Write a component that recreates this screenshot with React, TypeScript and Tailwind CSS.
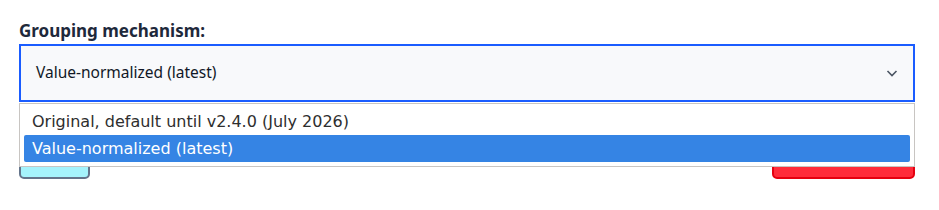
import React from "react";

export default function App() {
  return (
    <div className="w-[939px] h-[210px] bg-white pl-[19px] pr-[24px] pt-[19px] font-['Noto_Sans',sans-serif]">
      <div className="text-[17px] leading-[24px] font-bold text-[#1e293b]">Grouping mechanism:</div>
      <div className="relative mt-[1px]">
        <div className="flex items-center justify-between h-[58px] border-2 border-[#1a5cff] bg-[#f8f9fb] pl-[15px] pr-[14px]">
          <span className="text-[15.5px] text-[#111827]">Value-normalized (latest)</span>
          <svg width="14" height="14" viewBox="0 0 14 14" fill="none" className="text-[#4b5563]">
            <path d="M2.5 5l4.5 4.5L11.5 5" stroke="currentColor" strokeWidth="1.6" />
          </svg>
        </div>
        <div className="flex justify-between mt-[38px]">
          <div className="w-[71px] h-[39px] rounded-[5px] border-2 border-[#64748b] bg-[#a5f3fc]" />
          <div className="w-[143px] h-[39px] rounded-[5px] border-2 border-[#e5000f] bg-[#ff2b3a]" />
        </div>
        <div className="absolute left-0 right-0 top-[59px] h-[64px] border border-[#c8c5c2] bg-white pt-[4px] px-[4px] font-['DejaVu_Sans',sans-serif] text-[16px]">
          <div className="h-[27px] flex items-center pl-[8px] text-[#2e2e2e]">Original, default until v2.4.0 (July 2026)</div>
          <div className="h-[27px] flex items-center pl-[8px] text-white bg-[#3584e4] rounded-[2px]">Value-normalized (latest)</div>
        </div>
      </div>
    </div>
  );
}
